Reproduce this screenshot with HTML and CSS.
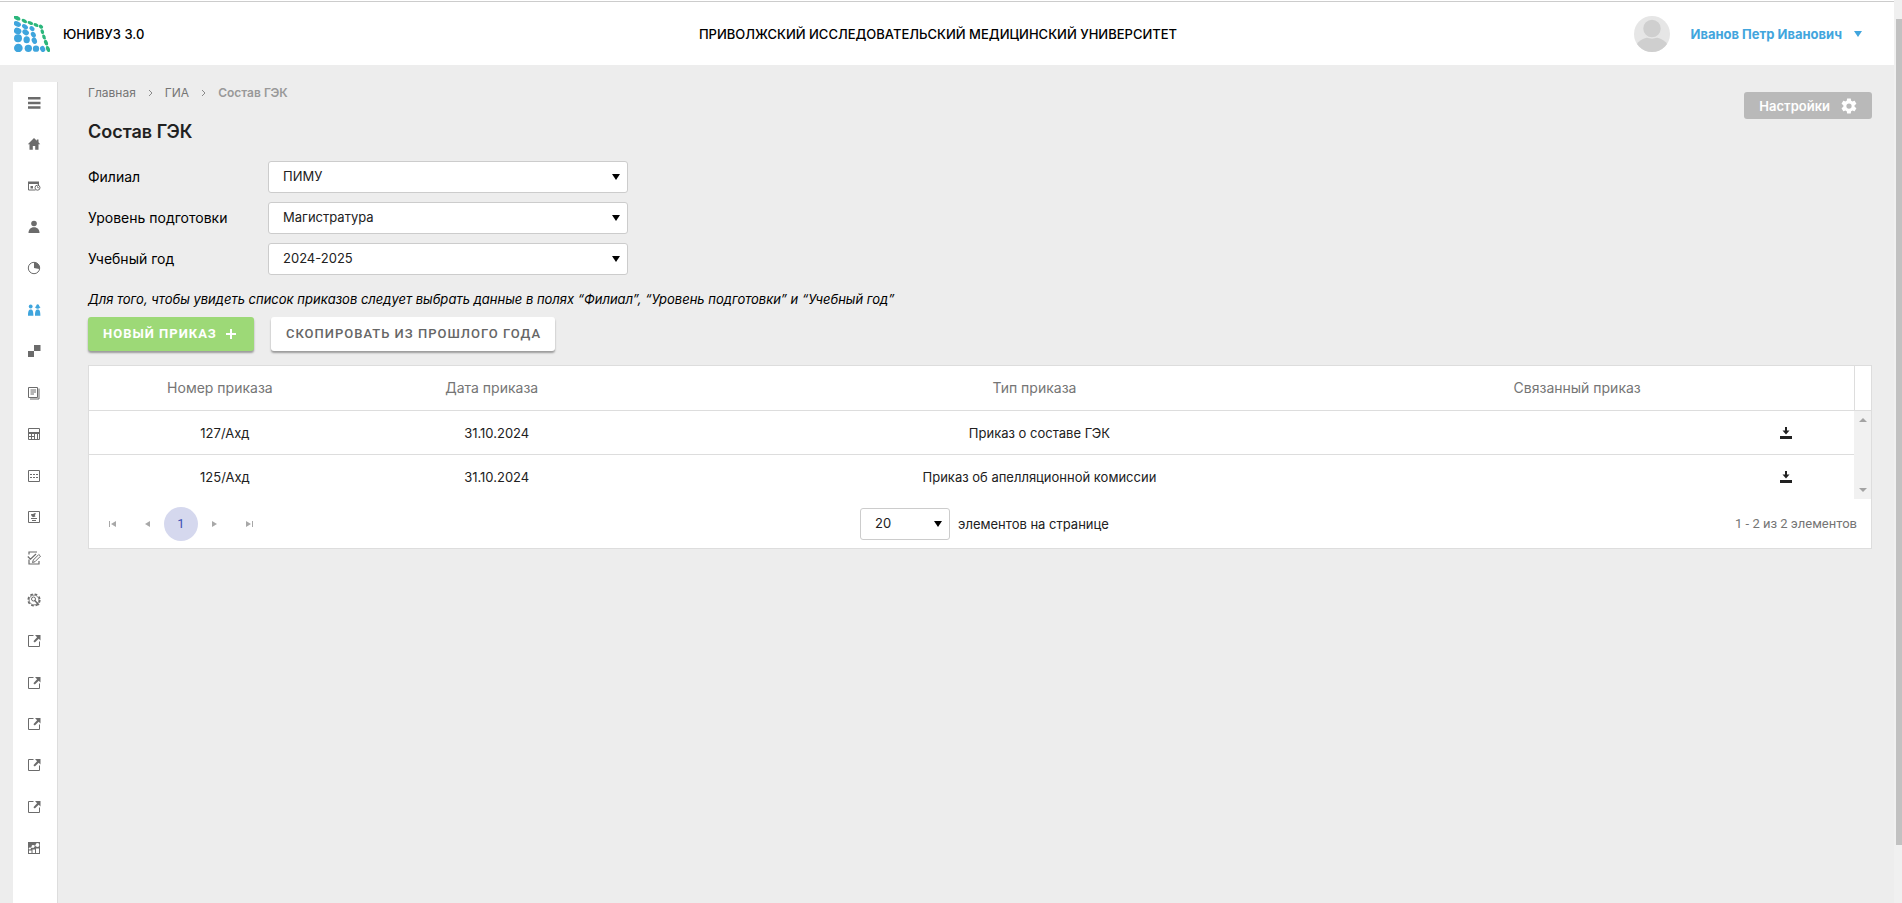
FILE: index.html
```html
<!DOCTYPE html>
<html lang="ru">
<head>
<meta charset="utf-8">
<title>Состав ГЭК</title>
<link rel="stylesheet" href="styles.css">
</head>
<body>
<svg class="sprite" aria-hidden="true">
  <symbol id="i-link" viewBox="0 0 14 14"><path d="M6.500 1.500H1.500V12.500H12.500V7.500" fill="none" stroke="currentColor"/><path d="M8 1h5.500v5.500l-1.800-1.800L7.800 8.600 6.400 7.200l3.700-3.900z"/></symbol>
  <symbol id="i-download" viewBox="0 0 14 14"><path d="M6 1h2v3.500h2.500L7 8.500 3.500 4.500H6zM1 10h12v3H1z"/></symbol>
</svg>
<div class="window">
  <div class="page">
    <header class="topbar">
      <a class="brand" href="#">
        <svg class="logo" viewBox="0 0 108 108" aria-hidden="true">
          <g fill="#3fa5dd">
            <circle cx="13" cy="96" r="13"/><circle cx="43" cy="97" r="11"/><circle cx="66" cy="98" r="9.500"/><ellipse cx="86" cy="99" rx="7.500" ry="9.500" transform="rotate(-25 86 99)"/>
            <circle cx="12" cy="67" r="12"/><ellipse cx="38" cy="71" rx="9.500" ry="10.500"/><ellipse cx="61" cy="74" rx="7.500" ry="10" transform="rotate(-25 61 74)"/>
            <ellipse cx="11" cy="45" rx="11.500" ry="9.500" transform="rotate(20 11 45)"/><ellipse cx="35" cy="49" rx="10.500" ry="8" transform="rotate(35 35 49)"/><ellipse cx="58" cy="56" rx="7" ry="9" transform="rotate(-30 58 56)"/>
            <ellipse cx="10" cy="24" rx="11.500" ry="7.500" transform="rotate(25 10 24)"/><ellipse cx="33" cy="32" rx="10" ry="6.500" transform="rotate(35 33 32)"/><ellipse cx="54" cy="38" rx="8.500" ry="6.500" transform="rotate(40 54 38)"/>
          </g>
          <g fill="#2bb67c">
            <ellipse cx="9" cy="6" rx="11" ry="6" transform="rotate(28 9 6)"/><ellipse cx="31" cy="15" rx="9" ry="5" transform="rotate(30 31 15)"/><ellipse cx="49" cy="21" rx="9" ry="5" transform="rotate(25 49 21)"/><ellipse cx="66" cy="27" rx="8" ry="5" transform="rotate(25 66 27)"/>
            <ellipse cx="81" cy="32" rx="7" ry="5.500" transform="rotate(35 81 32)"/><ellipse cx="85" cy="47" rx="5" ry="7.500" transform="rotate(-20 85 47)"/><ellipse cx="90" cy="63" rx="5" ry="8" transform="rotate(-20 90 63)"/><ellipse cx="96" cy="80" rx="5.500" ry="9" transform="rotate(-22 96 80)"/><ellipse cx="102" cy="99" rx="5.500" ry="9.500" transform="rotate(-22 102 99)"/>
          </g>
        </svg>
        <span>ЮНИВУЗ 3.0</span>
      </a>
      <div class="university">ПРИВОЛЖСКИЙ ИССЛЕДОВАТЕЛЬСКИЙ МЕДИЦИНСКИЙ УНИВЕРСИТЕТ</div>
      <button class="user" type="button">
        <svg class="avatar" viewBox="0 0 36 36" aria-hidden="true"><clipPath id="round"><circle cx="18" cy="18" r="18"/></clipPath><g clip-path="url(#round)"><path fill="#e6e6e6" d="M0 0h36v36H0z"/><ellipse cx="18" cy="33" rx="16.500" ry="12" fill="#cfcfcf"/><circle cx="18" cy="12.500" r="9.500" fill="#cfcfcf" stroke="#e6e6e6" stroke-width="1.500"/></g></svg>
        <span>Иванов Петр Иванович</span>
        <svg class="caret" viewBox="0 0 8 6" aria-hidden="true"><path d="M0 0h8L4 6z"/></svg>
      </button>
    </header>

    <div class="layout">
      <nav class="sidebar" aria-label="Основное меню">
        <a href="#" aria-label="Меню"><svg viewBox="0 0 14 14"><path d="M1 1h12.500v2.500H1zM1 5.700h12.500v2.500H1zM1 10.300h12.500v2.500H1z"/></svg></a>
        <a href="#" aria-label="Главная"><svg viewBox="0 0 14 14"><path d="M7 1 .8 7.300h1.700v5.400h3.300V9h2.400v3.700h3.300V7.300h1.700L11.500 5.300V2.500H9.800v1.200z"/></svg></a>
        <a href="#" aria-label="Расписание"><svg viewBox="0 0 14 14"><path d="M1 2.500h11v2.500H1z"/><path d="M1.500 5v6h7M11.500 3v3" fill="none" stroke="currentColor"/><path d="M3.500 7h2.500v2.500H3.500z"/><circle cx="10.500" cy="8.700" r="2.500" fill="#fff" stroke="currentColor"/><path d="M10.500 7.200v1.500h1.500" fill="none" stroke="currentColor" stroke-width=".8"/></svg></a>
        <a href="#" aria-label="Пользователь"><svg viewBox="0 0 14 14"><circle cx="7" cy="3.500" r="2.800"/><path d="M1.500 13c0-3.500 2-5.800 5.500-5.800s5.500 2.300 5.500 5.800z"/></svg></a>
        <a href="#" aria-label="Статистика"><svg viewBox="0 0 14 14"><circle cx="7" cy="7" r="5.700" fill="none" stroke="currentColor"/><path d="M7 1.300A5.700 5.700 0 0 1 12.700 7l-.5 1L7 7z"/></svg></a>
        <a class="active" href="#" aria-label="ГИА"><svg viewBox="0 0 14 14"><circle cx="3.700" cy="3.500" r="1.900"/><path d="M1 12.700c0-4.700.8-6.200 2.700-6.200s2.700 1.500 2.700 6.200zM8 12.700c0-4.700.8-6.200 2.700-6.200s2.700 1.500 2.700 6.200zM7.800 4.200l1.400-1C9.300 2 9.800 1.300 10.700 1.300s1.400.7 1.500 1.900l1.400 1c-.8.300-1 1.500-2.900 1.500S8.600 4.500 7.800 4.200z"/></svg></a>
        <a href="#" aria-label="Структура"><svg viewBox="0 0 14 14"><path d="M7 1h6.500v6H7zM1 7h6v6H1z"/></svg></a>
        <a href="#" aria-label="Журнал"><svg viewBox="0 0 14 14"><path d="M1.500 1.500h9v10h-9zM3.500 4H9M3.500 6H9M3.500 8H7M12 2.500v10.500H3" fill="none" stroke="currentColor"/></svg></a>
        <a href="#" aria-label="Таблица"><svg viewBox="0 0 14 14"><path d="M1.500 1.500h11v11h-11zM1.500 9.500h6M4.500 6v6M7.500 6v6M10.500 6v6" fill="none" stroke="currentColor"/><path d="M1.500 5h11v2h-11z"/></svg></a>
        <a href="#" aria-label="Список"><svg viewBox="0 0 14 14"><path d="M1.500 1.500h11v11h-11z" fill="none" stroke="currentColor"/><path d="M3 5.500h8M3 8.500h8" stroke="currentColor" stroke-dasharray="2 1"/></svg></a>
        <a href="#" aria-label="Анкеты"><svg viewBox="0 0 14 14"><path d="M1.500 1.500h11v11h-11zM4 8.500h6M5 10.500h4" fill="none" stroke="currentColor"/><path d="M4 4h2l2-1 1 .8L7.800 5 8.500 6.500 6 7.300 4.500 6z"/></svg></a>
        <a href="#" aria-label="Проверка"><svg viewBox="0 0 14 14"><path d="M2 3.500V1h8M2 8.500v4.500h10v-3M.8 5.500l2.700 2.700L9 3" fill="none" stroke="currentColor" stroke-width="1.200"/><path d="M5.500 11.500 6.300 9 11.800 3.500l1.700 1.700L8 10.700z" fill="#fff" stroke="currentColor"/></svg></a>
        <a href="#" aria-label="Администрирование"><svg viewBox="0 0 14 14"><circle cx="7" cy="7" r="5.700" fill="none" stroke="currentColor" stroke-width="1.800" stroke-dasharray="2.600 1.877"/><circle cx="7" cy="7" r="4.900" fill="#fff" stroke="currentColor" stroke-width=".8"/><circle cx="6.500" cy="6" r="2" fill="none" stroke="currentColor"/><path d="m7.500 7.300 4.500 4.800" stroke="currentColor" stroke-width="1.500"/></svg></a>
        <a href="#" aria-label="Внешний раздел 1"><svg><use href="#i-link"/></svg></a>
        <a href="#" aria-label="Внешний раздел 2"><svg><use href="#i-link"/></svg></a>
        <a href="#" aria-label="Внешний раздел 3"><svg><use href="#i-link"/></svg></a>
        <a href="#" aria-label="Внешний раздел 4"><svg><use href="#i-link"/></svg></a>
        <a href="#" aria-label="Внешний раздел 5"><svg><use href="#i-link"/></svg></a>
        <a href="#" aria-label="Отчёты"><svg viewBox="0 0 14 14"><path d="M1 1h12v12H1z"/><g fill="#fff"><path d="M2 9.500h2.500v2.500H2zM5.500 8.500h2.500v3.500h-2.500zM9 7.500h3v4.500H9z"/><circle cx="2.800" cy="7.500" r="1.100"/><circle cx="6" cy="5.500" r="1.400"/><circle cx="10.500" cy="4" r="1.900"/><path d="m3 7.500 3-2 4.500-1.500" fill="none" stroke="#fff" stroke-width=".7"/></g></svg></a>
      </nav>

      <main class="content">
        <div class="heading">
          <div>
            <nav class="crumbs" aria-label="Навигация">
              <a href="#">Главная</a>
              <svg viewBox="0 0 5 8" aria-hidden="true"><path d="m1 1 3 3-3 3"/></svg>
              <a href="#">ГИА</a>
              <svg viewBox="0 0 5 8" aria-hidden="true"><path d="m1 1 3 3-3 3"/></svg>
              <span>Состав ГЭК</span>
            </nav>
            <h1>Состав ГЭК</h1>
          </div>
          <button class="settings" type="button">Настройки
            <svg viewBox="0 0 24 24" aria-hidden="true"><path d="M19.400 13a7.500 7.500 0 0 0 0-2l2.200-1.700c.2-.2.300-.4.100-.6l-2-3.500c-.1-.2-.4-.3-.6-.2l-2.600 1a7.700 7.700 0 0 0-1.700-1L14.400 2.400c0-.2-.2-.4-.5-.4h-4c-.2 0-.4.200-.5.400L9 5a7.700 7.700 0 0 0-1.700 1l-2.500-1c-.2-.1-.5 0-.6.200l-2 3.500c-.1.200-.1.500.1.600L4.500 11a7.500 7.500 0 0 0 0 2l-2.200 1.700c-.2.200-.2.400-.1.600l2 3.500c.1.200.4.300.6.200l2.500-1a7.700 7.700 0 0 0 1.700 1l.4 2.600c.1.200.3.400.5.400h4c.3 0 .5-.2.500-.4l.4-2.600a7.700 7.700 0 0 0 1.700-1l2.600 1c.2.100.5 0 .6-.2l2-3.500c.1-.2.100-.5-.1-.6zM12 15.500a3.500 3.500 0 1 1 0-7 3.500 3.500 0 0 1 0 7z"/></svg>
          </button>
        </div>

        <form class="filters">
          <label for="branch">Филиал</label>
          <select id="branch"><option>ПИМУ</option></select>
          <label for="level">Уровень подготовки</label>
          <select id="level"><option>Магистратура</option></select>
          <label for="year">Учебный год</label>
          <select id="year"><option>2024-2025</option></select>
        </form>

        <p class="hint">Для того, чтобы увидеть список приказов следует выбрать данные в полях “Филиал”, “Уровень подготовки” и “Учебный год”</p>

        <div class="actions">
          <button class="btn primary" type="button">НОВЫЙ ПРИКАЗ <svg viewBox="0 0 10 10" aria-hidden="true"><path d="M4 0h2v4h4v2H6v4H4V6H0V4h4z"/></svg></button>
          <button class="btn" type="button">СКОПИРОВАТЬ ИЗ ПРОШЛОГО ГОДА</button>
        </div>

        <section class="grid">
          <div class="grid-body">
            <table>
              <colgroup><col class="c2"><col class="c2"><col class="c6"><col class="c2"><col class="c1"></colgroup>
              <thead>
                <tr><th>Номер приказа</th><th>Дата приказа</th><th>Тип приказа</th><th>Связанный приказ</th><th></th></tr>
              </thead>
              <tbody>
                <tr><td>127/Ахд</td><td>31.10.2024</td><td>Приказ о составе ГЭК</td><td></td><td><button class="icon" type="button" aria-label="Скачать"><svg><use href="#i-download"/></svg></button></td></tr>
                <tr><td>125/Ахд</td><td>31.10.2024</td><td>Приказ об апелляционной комиссии</td><td></td><td><button class="icon" type="button" aria-label="Скачать"><svg><use href="#i-download"/></svg></button></td></tr>
              </tbody>
            </table>
            <div class="gutter" aria-hidden="true">
              <div class="gutter-head"></div>
              <div class="scroll">
                <svg viewBox="0 0 8 4"><path d="M0 4h8L4 0z"/></svg>
                <svg viewBox="0 0 8 4"><path d="M0 0h8L4 4z"/></svg>
              </div>
            </div>
          </div>
          <footer class="pager">
            <div class="pages">
              <button type="button" aria-label="Первая"><svg viewBox="0 0 8 8"><path d="M0 1h1v6H0zM7 1v6L2 4z"/></svg></button>
              <button type="button" aria-label="Предыдущая"><svg viewBox="0 0 8 8"><path d="M7 1v6L2 4z"/></svg></button>
              <button class="current" type="button">1</button>
              <button type="button" aria-label="Следующая"><svg viewBox="0 0 8 8"><path d="M1 1v6l5-3z"/></svg></button>
              <button type="button" aria-label="Последняя"><svg viewBox="0 0 8 8"><path d="M1 1v6l5-3zM7 1h1v6H7z"/></svg></button>
            </div>
            <div class="size">
              <select id="size"><option>20</option></select>
              <label for="size">элементов на странице</label>
            </div>
            <div class="info">1 - 2 из 2 элементов</div>
          </footer>
        </section>
      </main>
    </div>
  </div>
  <div class="page-scroll" aria-hidden="true"><div class="thumb"></div></div>
</div>
</body>
</html>
```
FILE: styles.css
```css
* { box-sizing: border-box; }
body {
  margin: 0;
  background: #ededed;
  color: #212121;
  font: 13px/16px Inter, "Noto Sans", sans-serif;
}
a { color: inherit; text-decoration: none; }
svg { fill: currentColor; display: block; flex: none; }
button, select { font: inherit; color: inherit; }
button { border: 0; padding: 0; background: none; cursor: pointer; }
.sprite { display: none; }

.window { display: flex; min-height: 100vh; }
.page { flex: 1; min-width: 0; display: flex; flex-direction: column; }
.page-scroll { width: 8px; padding: 19px 0 58px 2px; background: #f0f0f0; display: flex; }
.thumb { flex: 1; background: #c1c1c1; }

.topbar {
  display: grid;
  grid-template-columns: 1fr auto 1fr;
  align-items: center;
  height: 65px;
  padding: 2px 32px 0 14px;
  background: linear-gradient(#fff 1px, #ccc 1px, #ccc 2px, #fff 2px);
  color: #000;
  font-weight: 500;
}
.brand { display: flex; align-items: center; gap: 13px; }
.logo { width: 36px; height: 36px; }
.user { display: flex; align-items: center; justify-self: end; color: #41a5dd; font-weight: 700; }
.user span { margin: 0 12px 0 21px; }
.avatar { width: 36px; height: 36px; }
.caret { width: 8px; height: 6px; }

.layout { flex: 1; display: flex; }
.sidebar {
  width: 45px;
  margin: 17px 0 0 13px;
  padding: 0 2px 34px 0;
  display: flex;
  flex-direction: column;
  background: #fff;
  border-right: 1px solid #ddd;
  color: #6b6b6b;
}
.sidebar a { flex: 1; min-height: 30px; display: flex; align-items: center; justify-content: center; }
.sidebar svg { width: 14px; height: 14px; }
.sidebar .active { color: #3fa5dd; }

.content { flex: 1; min-width: 0; padding: 20px 22px 0 30px; }
.heading { display: flex; justify-content: space-between; align-items: flex-start; }
.crumbs { display: flex; align-items: center; gap: 12px; color: #757575; font-size: 12px; }
.crumbs svg { width: 5px; height: 8px; fill: none; stroke: #8a8a8a; }
.crumbs span { color: #999; font-weight: 600; }
h1 { margin: 19px 0 17px; font-size: 18px; line-height: 24px; font-weight: 600; }
.settings {
  display: flex;
  align-items: center;
  gap: 10px;
  margin-top: 7px;
  padding: 0 14px 0 15px;
  height: 27px;
  border-radius: 3px;
  background: #b9b9b9;
  color: #fff;
  font-weight: 600;
}
.settings svg { width: 18px; height: 18px; }

.filters {
  display: grid;
  grid-template-columns: 180px 360px;
  row-gap: 9px;
  align-items: center;
  color: #000;
  font-size: 14px;
}
select {
  appearance: none;
  height: 32px;
  padding: 0 14px 2px;
  border: 1px solid #ccc;
  border-radius: 3px;
  color: #212121;
  font-size: 13px;
  background: #fff url("data:image/svg+xml,%3Csvg xmlns='http://www.w3.org/2000/svg' viewBox='0 0 8 6'%3E%3Cpath d='M0 0h8L4 6z'/%3E%3C/svg%3E") no-repeat right 7px center / 8px 6px;
}
.hint { margin: 16px 0 10px; color: #000; font-style: italic; }

.actions { display: flex; gap: 17px; }
.btn {
  display: flex;
  align-items: center;
  gap: 9px;
  height: 34px;
  padding: 0 14px 0 15px;
  border-radius: 3px;
  background: #fff;
  color: #666;
  font: 500 13px/16px Roboto, sans-serif;
  letter-spacing: 1px;
  box-shadow: 0 2px 2px rgba(0, 0, 0, .35);
}
.primary { padding-right: 18px; background: #9dd977; color: #fff; font-weight: 700; }
.btn svg { width: 10px; height: 10px; }

.grid { margin-top: 14px; border: 1px solid #ddd; background: #fff; }
.grid-body { display: flex; }
table { flex: 1; min-width: 0; table-layout: fixed; border-collapse: separate; border-spacing: 0; }
.c2 { width: 15.400%; }
.c6 { width: 46.100%; }
.c1 { width: 7.700%; }
th, td { height: 44px; padding: 0; text-align: center; border-bottom: 1px solid #ddd; }
th { height: 45px; padding-right: 10px; color: #757575; font-size: 14px; font-weight: 400; }
tbody tr:last-child td { border-bottom: 0; }
.icon { display: block; margin: 0 auto; }
.icon svg { width: 14px; height: 14px; }
.gutter { width: 17px; display: flex; flex-direction: column; }
.gutter-head { height: 45px; border: solid #ddd; border-width: 0 0 1px 1px; }
.scroll { flex: 1; padding: 7px 0; display: flex; flex-direction: column; justify-content: space-between; align-items: center; background: #f1f1f1; color: #a3a3a3; }
.scroll svg { width: 8px; height: 4px; }

.pager {
  display: grid;
  grid-template-columns: 1fr auto 1fr;
  align-items: center;
  height: 49px;
  padding: 0 14px 0 7px;
}
.pages { display: flex; color: #a8a8a8; }
.pages button { width: 34px; height: 34px; display: flex; align-items: center; justify-content: center; }
.pages svg { width: 8px; height: 8px; }
.pages .current { border-radius: 50%; background: #d5d8ee; color: #3f51b5; font-family: Roboto, sans-serif; }
.size { display: flex; align-items: center; gap: 8px; padding-left: 16px; }
.size select { width: 90px; }
.info { text-align: right; color: #757575; font: 13px/16px Roboto, sans-serif; }
```
